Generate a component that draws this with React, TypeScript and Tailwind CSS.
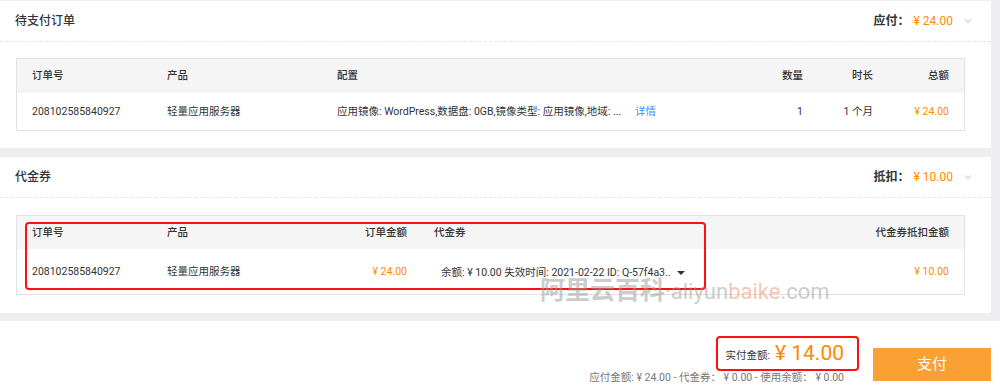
import { ChevronDown } from 'lucide-react';

const font = { fontFamily: 'Roboto, "Noto Sans CJK SC", sans-serif' };

const Section = ({ title, label, amount, children }: { title: string; label: string; amount: string; children: React.ReactNode }) => (
  <div className="w-[991px] bg-white">
    <div className="h-[41px] flex items-center justify-between pl-[15px] pr-[18px] border-b border-dashed border-[#e6e6e8]">
      <span className="text-[12px] font-medium text-[#333]">{title}</span>
      <div className="flex items-center">
        <span className="text-[12px] font-bold text-[#333]">{label}</span>
        <span className="ml-[4px] text-[12px] text-[#ff8a00]">{amount}</span>
        <ChevronDown size={10} strokeWidth={1.5} className="ml-[10px] text-[#888]" />
      </div>
    </div>
    {children}
  </div>
);

const App = () => {
  return (
    <div className="relative w-[1000px] h-[392px] bg-[#eeeef0] pt-px overflow-hidden" style={font}>
      {/* 待支付订单 */}
      <Section title="待支付订单" label="应付：" amount="¥ 24.00">
        <div className="pl-4 pr-[26px] pt-4 pb-[17px]">
          <div className="border border-[#e2e2e4] text-[10.5px] text-[#333]">
            <div className="h-[34px] flex items-center bg-[#f5f5f6] px-[15px] font-medium">
              <div className="w-[135px]">订单号</div>
              <div className="w-[170px]">产品</div>
              <div className="w-[298px]">配置</div>
              <div className="w-[66px]" />
              <div className="w-[102px] text-right">数量</div>
              <div className="w-[70px] text-right">时长</div>
              <div className="flex-1 text-right">总额</div>
            </div>
            <div className="h-[37px] flex items-center px-[15px]">
              <div className="w-[135px]">208102585840927</div>
              <div className="w-[170px]">轻量应用服务器</div>
              <div className="w-[298px] whitespace-nowrap overflow-hidden">应用镜像: WordPress,数据盘: 0GB,镜像类型: 应用镜像,地域: ...</div>
              <div className="w-[66px] text-[#4a8af4]">详情</div>
              <div className="w-[102px] text-right">1</div>
              <div className="w-[70px] text-right">1 个月</div>
              <div className="flex-1 text-right text-[#ff8a00]">¥ 24.00</div>
            </div>
          </div>
        </div>
      </Section>

      <div className="h-[9px]" />

      {/* 代金券 */}
      <Section title="代金券" label="抵扣：" amount="¥ 10.00">
        <div className="pl-4 pr-[26px] pt-[17px] pb-[18px]">
          <div className="relative border border-[#e2e2e4] text-[10.5px] text-[#333]">
            <div className="h-[33px] flex items-center bg-[#f5f5f6] px-[15px] font-medium">
              <div className="w-[135px]">订单号</div>
              <div className="w-[140px]">产品</div>
              <div className="w-[100px] text-right">订单金额</div>
              <div className="w-[27px]" />
              <div className="w-[257px]">代金券</div>
              <div className="flex-1 text-right">代金券抵扣金额</div>
            </div>
            <div className="h-[45px] flex items-center px-[15px]">
              <div className="w-[135px]">208102585840927</div>
              <div className="w-[140px]">轻量应用服务器</div>
              <div className="w-[100px] text-right text-[#ff8a00]">¥ 24.00</div>
              <div className="w-[27px]" />
              <div className="w-[257px] h-[30px] mt-[4px] flex items-center justify-between pl-[7px] pr-[6px] border-b border-[#555]">
                <span className="whitespace-nowrap">余额: ¥ 10.00 失效时间: 2021-02-22 ID: Q-57f4a3..</span>
                <span className="w-0 h-0 border-l-[4px] border-r-[4px] border-t-[4px] border-l-transparent border-r-transparent border-t-[#333]" />
              </div>
              <div className="flex-1 text-right text-[#ff8a00]">¥ 10.00</div>
            </div>
            {/* red highlight */}
            <div className="absolute left-[8px] top-[6px] w-[681px] h-[68px] border-2 border-[#ff1010] rounded-[4px] pointer-events-none" />
          </div>
        </div>
      </Section>

      <div className="h-[8px]" />

      {/* footer */}
      <div className="h-[71px] bg-white flex justify-end pr-[9px]">
        <div className="relative mt-[20px] flex flex-col items-end">
          <div className="h-[24px] flex items-center">
            <span className="text-[10.5px] text-[#333] mt-[6px]">实付金额:</span>
            <span className="ml-[5px] text-[21px] leading-none text-[#ff8a00]">¥ 14.00</span>
          </div>
          <div className="mt-[6px] text-[10.5px] leading-[14px] text-[#777] whitespace-nowrap">
            应付金额: ¥ 24.00 - 代金券：&nbsp;¥ 0.00 - 使用余额：&nbsp;¥ 0.00
          </div>
          <div className="absolute right-[-15px] top-[-5px] w-[143px] h-[35px] border-2 border-[#ff1010] rounded-[4px] pointer-events-none" />
        </div>
        <button className="ml-[29px] mt-[27px] w-[118px] h-[33px] bg-[#fba032] text-white text-[15px]">支付</button>
      </div>

      {/* watermark */}
      <div className="absolute left-[540px] top-[272px] flex items-baseline whitespace-nowrap pointer-events-none select-none">
        <span className="text-[25px] font-bold text-[#9a9a9a] opacity-50">阿里云百科</span>
        <span className="text-[22px] text-[#9a9a9a] opacity-50">·aliyun</span>
        <span className="text-[22px] text-[#f0a080] opacity-60">baike</span>
        <span className="text-[22px] text-[#9a9a9a] opacity-50">.com</span>
      </div>
    </div>
  );
};

export default App;
